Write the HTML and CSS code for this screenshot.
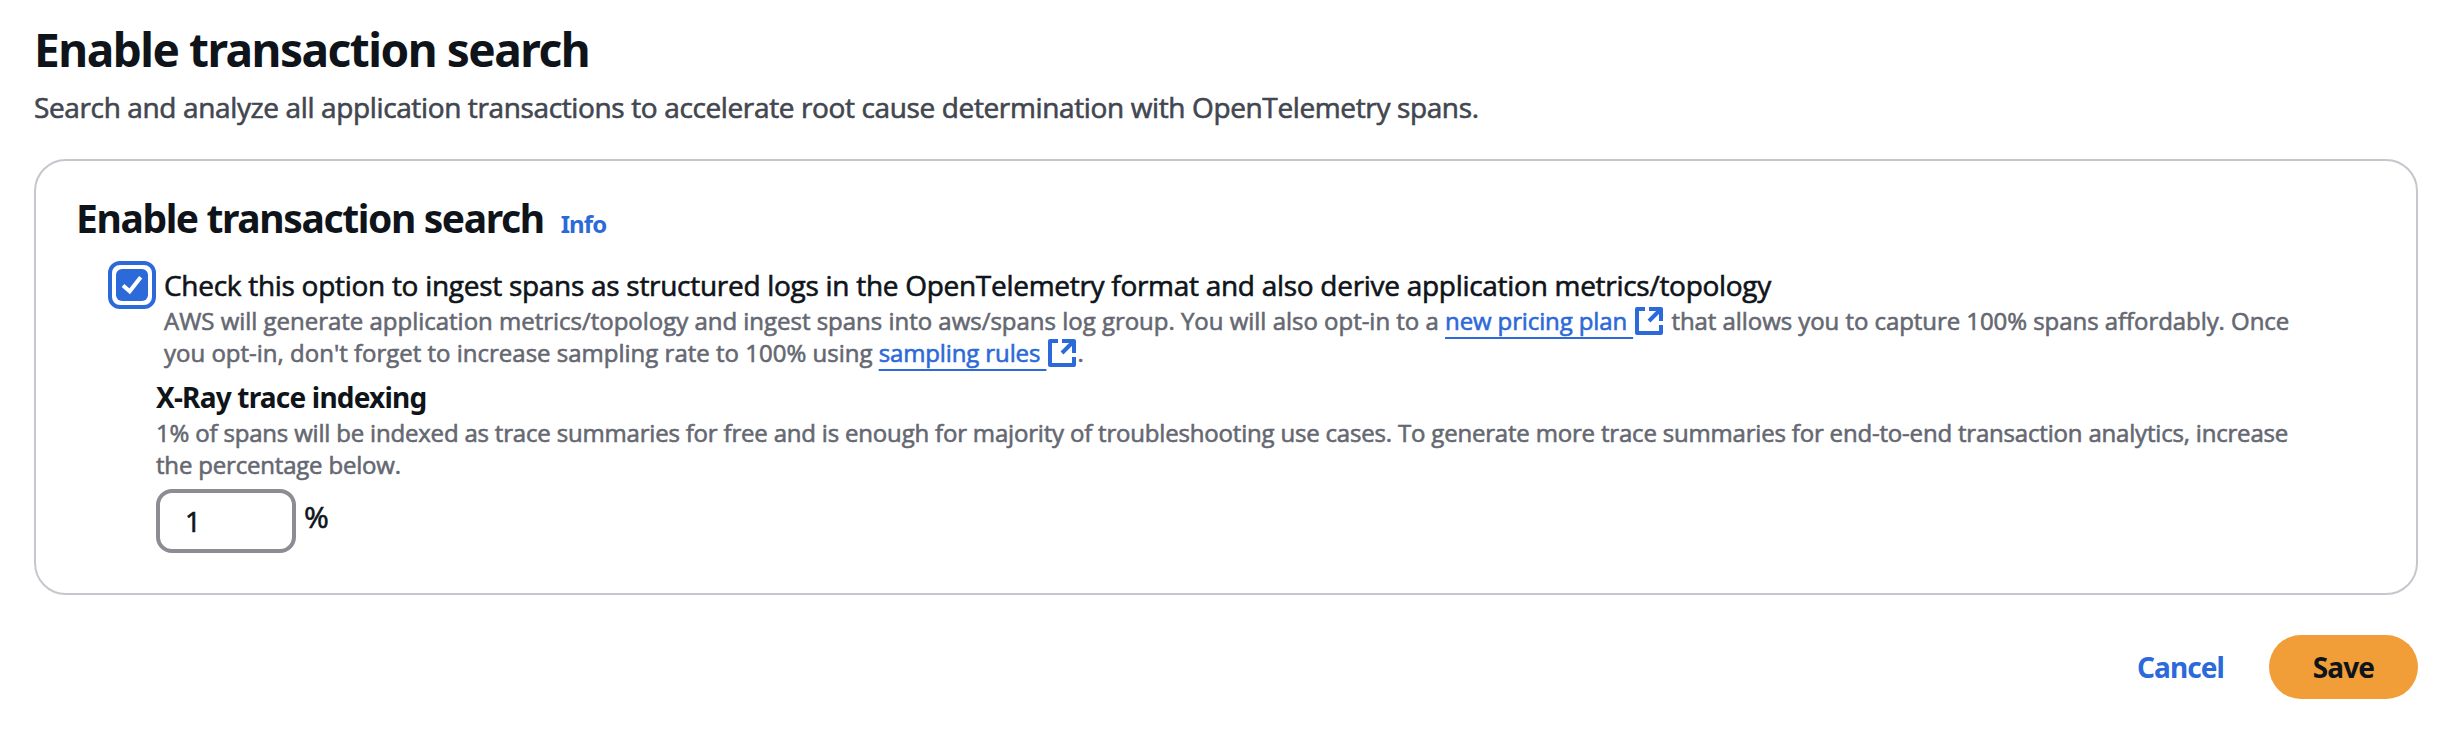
FILE: index.html
```html
<!DOCTYPE html>
<html lang="en">
<head>
<meta charset="utf-8">
<title>Enable transaction search</title>
<link rel="stylesheet" href="styles.css">
</head>
<body>
<main class="page">
  <h1 class="page-title">Enable transaction search</h1>
  <p class="page-description">Search and analyze all application transactions to accelerate root cause determination with OpenTelemetry spans.</p>
  <section class="card">
    <header class="card-header">
      <h2 class="card-title">Enable transaction search</h2>
      <a class="info">Info</a>
    </header>
    <div class="option">
      <span class="checkbox"><svg viewBox="0 0 32 32"><path d="M7 16.5 13.7 22.3 24.7 8.3"/></svg></span>
      <div class="option-text">
        <div class="label">Check this option to ingest spans as structured logs in the OpenTelemetry format and also derive application metrics/topology</div>
        <div class="hint"><span class="lead">AWS will generate application metrics/topology and ingest spans into aws/spans log group. You will also opt-in to a </span><a class="link">new pricing plan </a><svg class="external" viewBox="0 0 28 28"><path d="M10 2H2V26H26V18M14 2H26V14M26 2 14 14"/></svg> <span class="after-link">that allows you to capture 100% spans affordably. Once</span><br>you opt-in, don't forget to increase sampling rate to 100% using <a class="link">sampling rules </a><svg class="external" viewBox="0 0 28 28"><path d="M10 2H2V26H26V18M14 2H26V14M26 2 14 14"/></svg><span class="stop">.</span></div>
      </div>
    </div>
    <div class="field">
      <h3 class="field-title">X-Ray trace indexing</h3>
      <div class="hint field-hint">1% of spans will be indexed as trace summaries for free and is enough for majority of troubleshooting use cases. To generate more trace summaries for end-to-end transaction analytics, increase<br>the percentage below.</div>
      <div class="percent"><span class="input">1</span><span class="unit">%</span></div>
    </div>
  </section>
  <footer class="actions">
    <a class="cancel">Cancel</a>
    <button class="save">Save</button>
  </footer>
</main>
</body>
</html>
```
FILE: styles.css
```css
body {
  margin: 0;
  background: #fff;
  color: #0f141a;
  font: 400 28px/40px "Open Sans", "Noto Sans", sans-serif;
  white-space: nowrap;
}
h1, h2, h3, p { margin: 0; }
.page { padding: 19px 26px 0 34px; }
.page-title, .card-title, .info, .field-title, .cancel, .save {
  font-family: "Noto Sans", sans-serif;
  font-weight: 700;
}
.page-title { font-size: 46px; line-height: 60px; letter-spacing: -1.5px; }
.page-description, .label, .hint, .percent { -webkit-text-stroke: 0.6px; }
.page-description { margin-top: 8px; color: #424650; letter-spacing: -0.37px; }
.card {
  box-sizing: border-box;
  height: 436px;
  margin-top: 32px;
  padding: 31px 40px 0;
  border: 2px solid #c6c6cd;
  border-radius: 32px;
}
.card-header { display: flex; align-items: baseline; gap: 17px; height: 50px; }
.card-title { font-size: 39px; line-height: 51px; letter-spacing: -1.39px; }
.info { font-size: 24px; line-height: 32px; color: #2c69d9; letter-spacing: -0.9px; }
.option { display: flex; gap: 8px; margin: 19px 0 0 32px; }
.checkbox {
  box-sizing: border-box;
  flex: none;
  width: 48px;
  height: 48px;
  padding: 4px;
  border: 4px solid #2c69d9;
  border-radius: 12px;
}
.checkbox svg { display: block; width: 32px; height: 32px; border-radius: 6px; background: #2c69d9; }
.checkbox path { fill: none; stroke: #fff; stroke-width: 4; }
.option-text { padding-top: 4px; }
.label { letter-spacing: -0.287px; }
.hint { font-size: 24px; line-height: 32px; color: #656871; }
.lead { letter-spacing: -0.018px; }
.link {
  color: #2c69d9;
  letter-spacing: -0.12px;
  text-decoration: underline;
  text-decoration-thickness: 2px;
  text-underline-offset: 7px;
  white-space: pre;
}
.external { width: 28px; height: 28px; margin-left: 2px; vertical-align: -5px; }
.external path { fill: none; stroke: #2c69d9; stroke-width: 4; stroke-linejoin: round; }
.after-link { margin-left: 2px; letter-spacing: -0.06px; }
.stop { margin-left: 1px; }
.field { margin: 8px 0 0 80px; }
.field-title { font-size: 28px; line-height: 40px; letter-spacing: -0.8px; }
.field-hint { letter-spacing: -0.188px; }
.percent { display: flex; gap: 8px; margin-top: 8px; }
.input {
  box-sizing: border-box;
  width: 140px;
  height: 64px;
  padding: 8px 25px;
  border: 4px solid #8c8c94;
  border-radius: 16px;
}
.unit { padding-top: 9px; font-size: 30px; line-height: 38px; }
.actions { display: flex; justify-content: flex-end; align-items: center; gap: 45px; margin-top: 40px; }
.cancel { color: #2c69d9; letter-spacing: -0.9px; }
.save {
  width: 149px;
  height: 64px;
  padding: 0;
  border: 0;
  border-radius: 32px;
  background: #f19e38;
  color: #0f141a;
  font-size: 28px;
  line-height: 40px;
  letter-spacing: -0.9px;
}
```
